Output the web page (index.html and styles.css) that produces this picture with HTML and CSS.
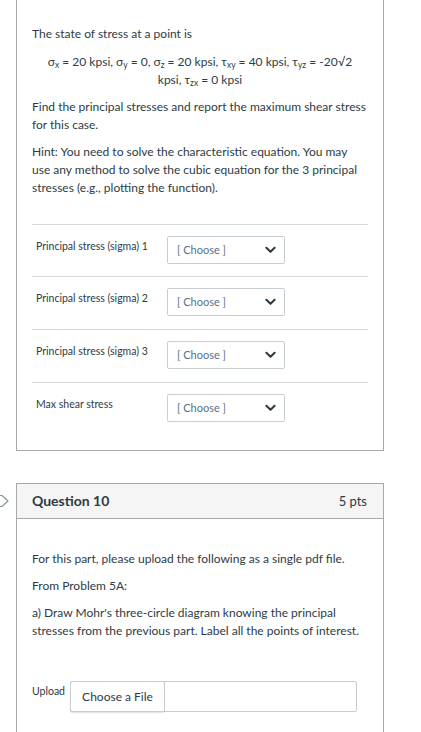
FILE: index.html
```html
<!DOCTYPE html>
<html>
<head>
<meta charset="utf-8">
<link rel="stylesheet" href="styles.css">
</head>
<body>
<div class="page">
  <div class="card card-first">
    <div class="body first-body">
      <p>The state of stress at a point is</p>
      <p class="formula">σ<sub>x</sub> = 20 kpsi, σ<sub>y</sub> = 0, σ<sub>z</sub> = 20 kpsi, τ<sub>xy</sub> = 40 kpsi, τ<sub>yz</sub> = -20√2<br>kpsi, τ<sub>zx</sub> = 0 kpsi</p>
      <p>Find the principal stresses and report the maximum shear stress for this case.</p>
      <p>Hint: You need to solve the characteristic equation. You may use any method to solve the cubic equation for the 3 principal stresses (e.g., plotting the function).</p>
      <div class="answers">
        <div class="row">
          <div class="label">Principal stress (sigma) 1</div>
          <div class="select"><span>[ Choose ]</span><svg class="chev" viewBox="0 0 12 8" width="11" height="8"><path d="M1.5 1.5 L6 6 L10.5 1.5" fill="none" stroke="#2d3b45" stroke-width="2.2" stroke-linecap="round" stroke-linejoin="round"/></svg></div>
        </div>
        <div class="row">
          <div class="label">Principal stress (sigma) 2</div>
          <div class="select"><span>[ Choose ]</span><svg class="chev" viewBox="0 0 12 8" width="11" height="8"><path d="M1.5 1.5 L6 6 L10.5 1.5" fill="none" stroke="#2d3b45" stroke-width="2.2" stroke-linecap="round" stroke-linejoin="round"/></svg></div>
        </div>
        <div class="row">
          <div class="label">Principal stress (sigma) 3</div>
          <div class="select"><span>[ Choose ]</span><svg class="chev" viewBox="0 0 12 8" width="11" height="8"><path d="M1.5 1.5 L6 6 L10.5 1.5" fill="none" stroke="#2d3b45" stroke-width="2.2" stroke-linecap="round" stroke-linejoin="round"/></svg></div>
        </div>
        <div class="row">
          <div class="label">Max shear stress</div>
          <div class="select"><span>[ Choose ]</span><svg class="chev" viewBox="0 0 12 8" width="11" height="8"><path d="M1.5 1.5 L6 6 L10.5 1.5" fill="none" stroke="#2d3b45" stroke-width="2.2" stroke-linecap="round" stroke-linejoin="round"/></svg></div>
        </div>
      </div>
    </div>
  </div>

  <div class="card card-second">
    <svg class="flag" viewBox="0 0 20 14" width="20" height="14"><path d="M1 1.5 H12 L18 7 L12 12.5 H1 Z" fill="#fff" stroke="#8b969e" stroke-width="1.2" stroke-linejoin="round"/></svg>
    <div class="header">
      <span class="qname">Question 10</span>
      <span class="pts">5 pts</span>
    </div>
    <div class="body second-body">
      <p>For this part, please upload the following as a single pdf file.</p>
      <p>From Problem 5A:</p>
      <p>a) Draw Mohr's three-circle diagram knowing the principal stresses from the previous part. Label all the points of interest.</p>
      <div class="upload">
        <div class="up-label">Upload</div>
        <div class="file">
          <div class="file-btn">Choose a File</div>
        </div>
      </div>
    </div>
  </div>
</div>
</body>
</html>
```

FILE: styles.css
```css
html, body {
  margin: 0;
  padding: 0;
  background: #fff;
}
body {
  font-family: Lato, "Open Sans", sans-serif;
  color: #2d3b45;
  font-size: 12px;
  line-height: 18px;
  overflow: hidden;
  height: 732px;
}
.page {
  padding-left: 16px;
  width: 368px;
}
.card {
  border: 1px solid #a9a9a9;
  background: #fff;
  position: relative;
}
.card-first {
  border-top: none;
}
.body {
  padding: 0 15px;
}
.first-body {
  padding-top: 25px;
  padding-bottom: 15px;
}
p {
  margin: 0 0 9px;
}
.first-body > p:first-child {
  margin-bottom: 10px;
}
.formula {
  text-align: center;
}
sub {
  font-size: 8.5px;
  line-height: 0;
  vertical-align: -2px;
}
.answers {
  margin-top: 27px;
}
.row {
  border-top: 1px solid #d6d9dc;
  padding: 11px 0 13px;
  display: flex;
  align-items: flex-start;
}
.row:first-child {
  padding-bottom: 12px;
}
.label {
  width: 131px;
  padding-left: 4px;
  font-size: 10.5px;
  line-height: 14px;
  padding-top: 3px;
}
.select {
  border: 1px solid #c7cdd1;
  border-radius: 2px;
  display: flex;
  align-items: center;
  justify-content: space-between;
  padding: 0 8px 0 9px;
  box-sizing: border-box;
  width: 118px;
  height: 28px;
  font-size: 11px;
  color: #55728b;
}
.chev {
  display: block;
}
.card-second {
  margin-top: 32px;
  border-bottom: none;
  height: 260px;
}
.flag {
  position: absolute;
  left: -27px;
  top: 10px;
}
.header {
  background: #f5f5f5;
  border-bottom: 1px solid #a9a9a9;
  height: 34px;
  display: flex;
  align-items: center;
  justify-content: space-between;
  padding: 0 16px 0 15px;
}
.qname {
  font-weight: bold;
  font-size: 14px;
}
.pts {
  font-size: 13px;
}
.second-body {
  padding-top: 31px;
}
.second-body p {
  margin-bottom: 9px;
}
.upload {
  display: flex;
  align-items: flex-start;
  margin-top: 41px;
}
.up-label {
  font-size: 10.5px;
  line-height: 14px;
  padding-top: 3px;
  width: 38px;
}
.file {
  width: 287px;
  height: 31px;
  border: 1px solid #c7cdd1;
  border-radius: 2px;
  box-sizing: border-box;
  display: flex;
}
.file-btn {
  width: 93px;
  border: 1px solid #c7cdd1;
  border-radius: 2px;
  margin: -1px 0 -1px -1px;
  box-shadow: 0 1px 1px rgba(0,0,0,0.12);
  display: flex;
  align-items: center;
  justify-content: center;
  font-size: 12px;
  color: #2d3b45;
  padding-top: 1px;
}
```
